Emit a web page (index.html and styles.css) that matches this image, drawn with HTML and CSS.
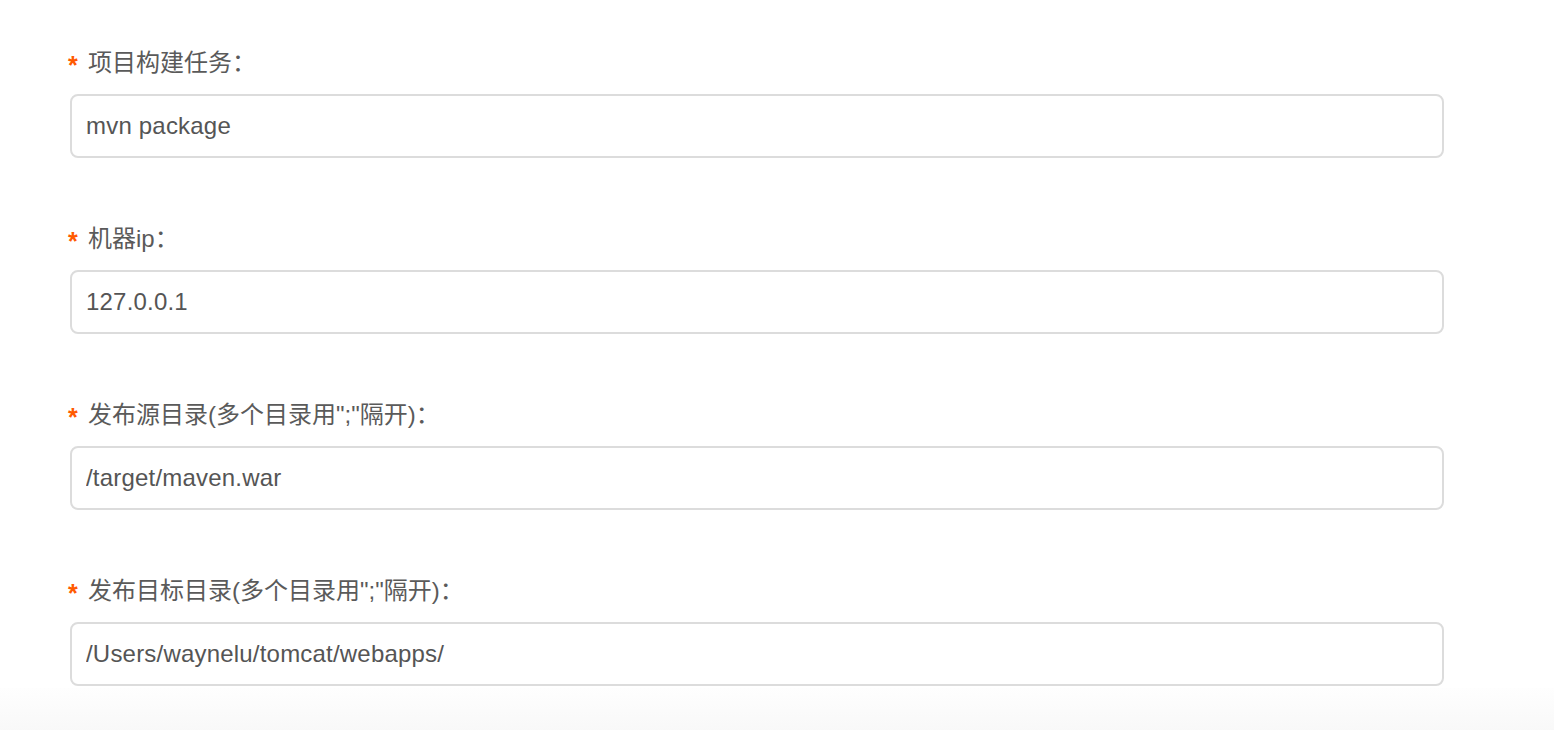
FILE: index.html
```html
<!DOCTYPE html>
<html lang="zh-CN">
<head>
<meta charset="utf-8">
<title>构建配置</title>
<link rel="stylesheet" href="styles.css">
</head>
<body>
<form class="form">
  <div class="field">
    <label class="label"><span class="req">*</span>项目构建任务：</label>
    <input class="input" type="text" value="mvn package">
  </div>
  <div class="field">
    <label class="label"><span class="req">*</span>机器ip：</label>
    <input class="input" type="text" value="127.0.0.1">
  </div>
  <div class="field">
    <label class="label"><span class="req">*</span>发布源目录(多个目录用";"隔开)：</label>
    <input class="input" type="text" value="/target/maven.war">
  </div>
  <div class="field">
    <label class="label"><span class="req">*</span>发布目标目录(多个目录用";"隔开)：</label>
    <input class="input" type="text" value="/Users/waynelu/tomcat/webapps/">
  </div>
</form>
<div class="footer"></div>
</body>
</html>
```

FILE: styles.css
```css
html, body {
  margin: 0;
  padding: 0;
  background: #fff;
}
body {
  font-family: "Liberation Sans", "Noto Sans CJK SC", sans-serif;
  color: #555;
}
.form {
  padding: 44px 0 0 70px;
  width: 1374px;
}
.field {
  display: flex;
  flex-direction: column;
  margin-bottom: 62px;
}
.field:last-child {
  margin-bottom: 0;
}
.label {
  display: flex;
  align-items: center;
  height: 32px;
  font-size: 24px;
  color: #5a5a5a;
  margin-bottom: 18px;
}
.req {
  color: #ff5a00;
  font-size: 25px;
  font-weight: bold;
  line-height: 1;
  width: 20px;
  margin-left: -2px;
  position: relative;
  top: 5px;
}
.input {
  box-sizing: border-box;
  height: 64px;
  width: 1374px;
  border: 2px solid #dcdcdc;
  border-radius: 8px;
  padding: 0 14px;
  font-family: "Liberation Sans", "Noto Sans CJK SC", sans-serif;
  font-size: 24px;
  letter-spacing: 0.2px;
  color: #555;
  background: #fff;
  outline: none;
}
.footer {
  margin-top: 2px;
  height: 60px;
  background: linear-gradient(#fefefe, #f6f6f6);
}
```
